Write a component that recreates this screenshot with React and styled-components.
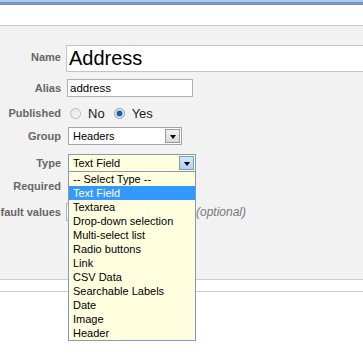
import React from 'react'
import styled, { createGlobalStyle } from 'styled-components'

const Global = createGlobalStyle`
  body {
    margin: 0;
    background: #fff;
    font-family: "Liberation Sans", Arial, sans-serif;
    overflow: hidden;
  }
`

const Page = styled.div`
  width: 363px;
  height: 361px;
  overflow: hidden;
`

const TopBar = styled.div`
  height: 5px;
  background: linear-gradient(#a9cde2 0, #a9cde2 2px, #7f8dcc 2px, #7f8dcc 5px);
`

const Header = styled.div`
  height: 20px;
  background: #fff;
  border-bottom: 1px solid #cccccc;
`

const Panel = styled.div`
  background: #f2f2f2;
  height: 254px;
  padding-top: 15px;
  box-sizing: border-box;
  border-bottom: 1px solid #cccccc;
`

const Spacer = styled.div`
  height: 11px;
  border-bottom: 1px solid #cccccc;
`

const Row = styled.div`
  display: flex;
  align-items: center;
  height: ${p => p.h}px;
  gap: ${p => p.gap || 5}px;
`

const Label = styled.div`
  width: 61px;
  flex: none;
  display: flex;
  justify-content: flex-end;
  white-space: nowrap;
  font-size: 11px;
  font-weight: bold;
  color: #666;
`

const BigInput = styled.div`
  flex: 1;
  height: 27px;
  box-sizing: border-box;
  background: #fff;
  border: 1px solid #c4c4c4;
  border-right: none;
  font-size: 20px;
  color: #000;
  line-height: 25px;
  padding-left: 2px;
  margin-top: 3px;
`

const Input = styled.div`
  width: ${p => p.w}px;
  height: 18px;
  box-sizing: border-box;
  background: #fff;
  border: 1px solid #b0b0b0;
  font-size: 11.5px;
  line-height: 16px;
  padding-left: 2px;
  color: #000;
`

const Radios = styled.div`
  display: flex;
  align-items: center;
  font-size: 13px;
  color: #222;
  padding-left: 4px;
`

const Radio = styled.span`
  width: 11px;
  height: 11px;
  border-radius: 50%;
  box-sizing: border-box;
  border: 1px solid ${p => (p.on ? '#7f9db9' : '#b9b9b9')};
  background: ${p => (p.on ? 'radial-gradient(circle, #1c5f9e 0 2.5px, #8fb5da 3px, #eef4fa 4px)' : 'linear-gradient(135deg, #e4e4e4, #fafafa)')};
  margin-right: 7px;
`

const RadioText = styled.span`
  margin-right: ${p => p.mr || 0}px;
`

const SelectBox = styled.div`
  position: relative;
  width: ${p => p.w}px;
  height: 18px;
  box-sizing: border-box;
  border: 1px solid ${p => (p.active ? '#7f9db9' : '#a5a5a5')};
  background: ${p => (p.active ? '#ffffdd' : '#fff')};
  display: flex;
  align-items: center;
  justify-content: space-between;
  font-size: 11px;
  color: #000;
  padding-left: 4px;
  margin-left: 2px;
`

const ArrowBtn = styled.span`
  width: 15px;
  height: 14px;
  margin-right: 1px;
  box-sizing: border-box;
  border: 1px solid ${p => (p.active ? '#7f9db9' : '#9a9a9a')};
  background: ${p => (p.active ? 'linear-gradient(#d4e6f8, #b5d2ef)' : 'linear-gradient(#f2f2f2, #dadada)')};
  display: flex;
  align-items: center;
  justify-content: center;
  &::after {
    content: '';
    border-left: 3.5px solid transparent;
    border-right: 3.5px solid transparent;
    border-top: 4px solid #000;
    margin-top: 1px;
  }
`

const Options = styled.ul`
  position: absolute;
  top: 17px;
  left: -1px;
  width: 128px;
  margin: 0;
  padding: 0;
  list-style: none;
  box-sizing: border-box;
  border: 1px solid #7f9db9;
  border-top: none;
  background: #ffffe0;
  z-index: 2;
`

const Option = styled.li`
  height: 14px;
  line-height: 14px;
  font-size: 11px;
  padding-left: 4px;
  color: ${p => (p.selected ? '#fff' : '#000')};
  background: ${p => (p.selected ? '#3399ff' : 'transparent')};
`

const Hint = styled.span`
  font-size: 12px;
  font-style: italic;
  color: #777;
  margin-left: -4px;
`

const types = [
  '-- Select Type --',
  'Text Field',
  'Textarea',
  'Drop-down selection',
  'Multi-select list',
  'Radio buttons',
  'Link',
  'CSV Data',
  'Searchable Labels',
  'Date',
  'Image',
  'Header',
]

export default function App() {
  return (
    <Page>
      <Global />
      <TopBar />
      <Header />
      <Panel>
        <Row h={31}>
          <Label>Name</Label>
          <BigInput>Address</BigInput>
        </Row>
        <Row h={32} gap={6}>
          <Label>Alias</Label>
          <Input w={126}>address</Input>
        </Row>
        <Row h={18}>
          <Label>Published</Label>
          <Radios>
            <Radio />
            <RadioText mr={9}>No</RadioText>
            <Radio on />
            <RadioText>Yes</RadioText>
          </Radios>
        </Row>
        <Row h={28}>
          <Label>Group</Label>
          <SelectBox w={114}>
            Headers
            <ArrowBtn />
          </SelectBox>
        </Row>
        <Row h={26}>
          <Label>Type</Label>
          <SelectBox w={128} active>
            Text Field
            <ArrowBtn active />
            <Options>
              {types.map(t => (
                <Option key={t} selected={t === 'Text Field'}>{t}</Option>
              ))}
            </Options>
          </SelectBox>
        </Row>
        <Row h={20}>
          <Label>Required</Label>
        </Row>
        <Row h={32}>
          <Label>Default values</Label>
          <Input w={129}></Input>
          <Hint>(optional)</Hint>
        </Row>
      </Panel>
      <Spacer />
    </Page>
  )
}
